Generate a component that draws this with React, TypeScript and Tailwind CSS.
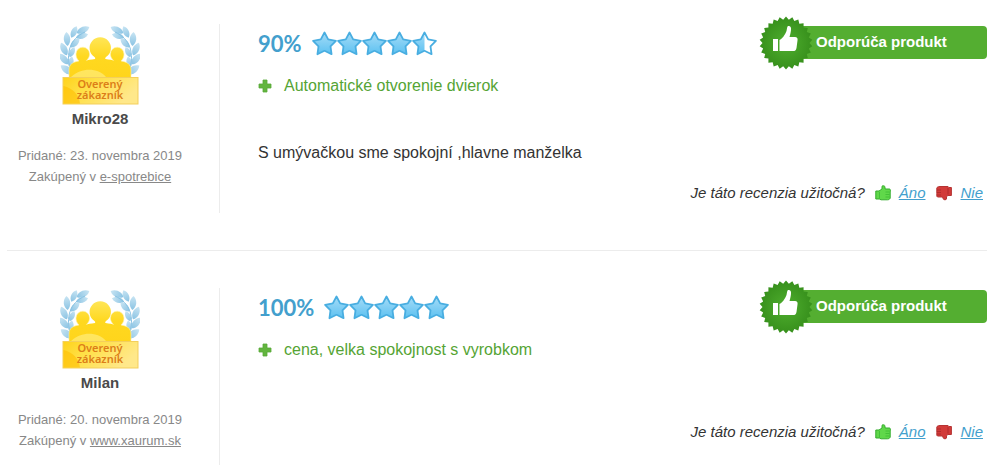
import { useId } from "react"

interface Review {
    id:      number
    author:  string
    date:    string
    shop:    string
    rating:  number
    pro:     string
    text?:   string
}

const reviews: Review[] = [
    { id: 1, author: "Mikro28", date: "23. novembra 2019", shop: "e-spotrebice", rating: 90, pro: "Automatické otvorenie dvierok", text: "S umývačkou sme spokojní ,hlavne manželka" },
    { id: 2, author: "Milan", date: "20. novembra 2019", shop: "www.xaurum.sk", rating: 100, pro: "cena, velka spokojnost s vyrobkom" },
]

// alternates an outer and an inner radius around a centre
const spikes = (count: number, outer: number, inner: number, cx: number, cy: number) =>
    Array.from({ length: count * 2 }, (_, i) => {
        const r = i % 2 ? inner : outer
        const a = (i * Math.PI) / count
        return `${(cx + r * Math.sin(a)).toFixed(2)},${(cy - r * Math.cos(a)).toFixed(2)}`
    }).join(" ")

const starPoints = spikes(5, 12, 6.3, 12.5, 13.5)
const sealPoints = spikes(26, 26.5, 23.5, 27, 27)

// x, y, rotation, scale of the leaves on the left branch
const leaves = [
    [23, 6, 65, 1], [14, 8, 25, 0.9], [22, 12, 75, 0.9], [7, 15, -5, 1], [15, 19, 45, 0.9],
    [4, 25, -25, 1], [12, 28, 25, 0.8], [4, 35, -40, 1], [11, 38, 10, 0.8], [7, 46, -55, 1.1],
]

function Laurel({ fill }: { fill: string }) {
    return (
        <g fill={fill}>
            {leaves.map(([x, y, angle, scale], i) => (
                <path key={i} d="M0-7C4.600-3 4 4 0 7-4 4-4.600-3 0-7z" transform={`translate(${x} ${y}) rotate(${angle}) scale(${scale})`} />
            ))}
            <path d="M25 8C10 15 5 28 11 49" fill="none" stroke={fill} strokeWidth="1" />
        </g>
    )
}

function VerifiedBadge() {
    const id = useId()
    return (
        <svg viewBox="0 0 80 81" className="w-20 h-[81px]" role="img" aria-label="Overený zákazník">
            <defs>
                <linearGradient id={`${id}l`} x1="0" y1="-8" x2="0" y2="8" gradientUnits="userSpaceOnUse">
                    <stop offset="0" stopColor="#cde7f4" />
                    <stop offset="1" stopColor="#86c1e2" />
                </linearGradient>
                <linearGradient id={`${id}p`} x1="0" y1="13" x2="0" y2="53" gradientUnits="userSpaceOnUse">
                    <stop offset="0" stopColor="#ffe658" />
                    <stop offset="0.5" stopColor="#ffd81f" />
                    <stop offset="1" stopColor="#ffd51c" />
                </linearGradient>
                <linearGradient id={`${id}b`} x1="0" y1="0" x2="1" y2="0.4">
                    <stop offset="0" stopColor="#ffd21a" />
                    <stop offset="0.4" stopColor="#ffe047" />
                    <stop offset="1" stopColor="#ffe88a" />
                </linearGradient>
            </defs>
            <Laurel fill={`url(#${id}l)`} />
            <g transform="translate(80 0) scale(-1 1)"><Laurel fill={`url(#${id}l)`} /></g>
            <g fill={`url(#${id}p)`} stroke="#fff2a6" strokeWidth="0.6">
                <path d="M9 55V46C9 40 13 38 19 37 17 35 16 33 16 30A6.800 6.800 0 0 1 29.600 30C29.600 33 28 35 26 37L32 40V55z" />
                <path d="M71 55V46C71 40 67 38 61 37 63 35 64 33 64 30A6.800 6.800 0 0 0 50.400 30C50.400 33 52 35 54 37L48 40V55z" />
            </g>
            <path d="M20 55V43C20 37 27 36 35 35 35.500 34 35 33.500 34.500 33A10.700 10.700 0 1 1 46 33C45 34 45 34.500 45.500 35 53 36 60 37 60 43V55z" fill={`url(#${id}p)`} />
            <path d="M11 53C22 43 38 44 46 53z" fill="#fff08c" opacity="0.6" />
            <rect x="3" y="53.500" width="75" height="26.500" fill={`url(#${id}b)`} stroke="#f3cf5c" />
            <path d="M3.500 79.500V62C13 64 19 71 20 79.500z" fill="#ffbe00" opacity="0.6" />
            <text fill="#dc7e18" fontFamily="'Noto Sans', sans-serif" fontSize="11" fontWeight="600" textAnchor="middle">
                <tspan x="40" y="64">Overený</tspan>
                <tspan x="40" y="75">zákazník</tspan>
            </text>
        </svg>
    )
}

function Stars({ rating }: { rating: number }) {
    const id = useId()
    return (
        <div className="flex" role="img" aria-label={`${rating}%`}>
            <svg width="0" height="0" aria-hidden="true">
                <linearGradient id={id} x1="0" y1="0" x2="0" y2="1">
                    <stop offset="0" stopColor="#a6dcf7" />
                    <stop offset="1" stopColor="#5cc1f1" />
                </linearGradient>
                <clipPath id={`${id}half`}><rect width="12.500" height="25" /></clipPath>
            </svg>
            {[0, 1, 2, 3, 4].map(i => {
                const half = rating < (i + 1) * 20
                return (
                    <svg key={i} viewBox="0 0 25 25" className="size-[25px]" aria-hidden="true">
                        <polygon points={starPoints} fill={`url(#${id})`} clipPath={half ? `url(#${id}half)` : undefined} />
                        <polygon points={starPoints} fill="none" stroke="#49aee1" strokeWidth="1.800" strokeLinejoin="round" />
                    </svg>
                )
            })}
        </div>
    )
}

function RecommendBadge() {
    const id = useId()
    return (
        <div className="flex items-center h-[33px] w-[228px] relative">
            <div className="absolute inset-y-0 left-7 right-0 rounded bg-[#54ae31]" />
            <svg viewBox="0 0 54 54" className="relative size-[54px] shrink-0" aria-hidden="true">
                <radialGradient id={id}>
                    <stop offset="0" stopColor="#4fae2e" />
                    <stop offset="1" stopColor="#37901c" />
                </radialGradient>
                <polygon points={sealPoints} fill={`url(#${id})`} />
                <g fill="#fff" transform="translate(0 -2)">
                    <rect x="14" y="25" width="5" height="12" />
                    <path d="M20.500 26C23 25 26 21 27.500 17 28 15 28 12.500 29 12 31 11.500 32.500 13 32 16 31.800 18.500 31 21 30.500 23H36C38 23 39 24.500 38.500 26.500L37.500 34C37 36.500 36 37 34 37H20.500z" />
                </g>
            </svg>
            <span className="relative ml-[3px] text-[15px] font-bold text-white whitespace-nowrap">Odporúča produkt</span>
        </div>
    )
}

function PlusIcon() {
    return (
        <svg viewBox="0 0 14 14" className="size-[14px] shrink-0" aria-hidden="true">
            <path d="M5 1h4v4h4v4H9v4H5V9H1V5h4z" fill="#62b53e" stroke="#58a837" strokeWidth="0.800" />
        </svg>
    )
}

function ThumbUp() {
    return (
        <svg viewBox="0 0 16 16" className="size-4" aria-hidden="true">
            <path d="M.8 6H4L7 4V1.300C7 .600 9.600.600 9.800 1.500L10.200 4H14.500C15.500 4 15.600 6 15.200 7V13C15 14 14 14.800 12.500 14.800H6L4.300 14H.8z" fill="#60d84a" stroke="#35ac2d" strokeWidth="1" />
            <path d="M4.500 7v6.500M10.500 7h4M10.500 9.500h4M10.500 12h4" stroke="#3ebb34" strokeWidth="0.800" />
        </svg>
    )
}

function ThumbDown() {
    return (
        <svg viewBox="0 0 16 16" className="size-4" aria-hidden="true">
            <path d="M.8 3C.8 2.500 2 1.500 4 1.500H12L13 2.500H15.400V10.500H12L10.500 11.500V14C10.500 15 7.300 15 7.300 14L6.500 12H1.500C.6 11.500.6 10 .8 8.500z" fill="#d23b39" stroke="#b53434" strokeWidth="1" />
            <path d="M12 3v6.500M1 5h4M1 7.500h4M1 10h4" stroke="#a82a2a" strokeWidth="0.800" />
        </svg>
    )
}

function ReviewItem({ review }: { review: Review }) {
    return (
        <article className="flex">
            <aside className="w-[213px] min-h-[177px] shrink-0 border-r border-[#ececec] pr-[26px] flex flex-col items-center text-center">
                <VerifiedBadge />
                <p className="mt-1 text-[15px] leading-5 font-bold text-[#4a4a4a]">{review.author}</p>
                <p className="mt-4 text-[13px] leading-[21px] text-[#888]">
                    Pridané: {review.date}<br />
                    Zakúpený v <a href="#" className="underline">{review.shop}</a>
                </p>
            </aside>
            <div className="flex-1 min-w-0 pl-[38px]">
                <div className="flex justify-between items-center h-[37px]">
                    <div className="flex items-center gap-[10px] pt-[2px]">
                        <span className="font-['Lato',sans-serif] text-[22px] leading-6 font-bold text-[#439fcd]">{review.rating}%</span>
                        <Stars rating={review.rating} />
                    </div>
                    <RecommendBadge />
                </div>
                <p className="mt-[13px] flex items-center gap-3 text-base leading-6 text-[#55a434]">
                    <PlusIcon />{review.pro}
                </p>
                {review.text && <p className="mt-[43px] text-base leading-6 text-[#333]">{review.text}</p>}
                <div className={`${review.text ? "mt-4 pb-2" : "mt-[58px]"} flex justify-end items-center text-[15px] leading-6 italic text-[#333] pr-1`}>
                    <span className="mr-[10px]">Je táto recenzia užitočná?</span>
                    <ThumbUp />
                    <a href="#" className="ml-2 mr-[11px] text-[#439fcd] underline">Áno</a>
                    <ThumbDown />
                    <a href="#" className="ml-2 text-[#439fcd] underline">Nie</a>
                </div>
            </div>
        </article>
    )
}

export default function App() {
    return (
        <main className="bg-white pl-[7px] pr-[10px] pt-6 font-['Liberation_Sans',Arial,sans-serif]">
            <div className="divide-y divide-[#ececec]">
                {reviews.map(review => (
                    <div key={review.id} className="pb-[37px] not-first:pt-[37px] last:pb-0">
                        <ReviewItem review={review} />
                    </div>
                ))}
            </div>
        </main>
    )
}
